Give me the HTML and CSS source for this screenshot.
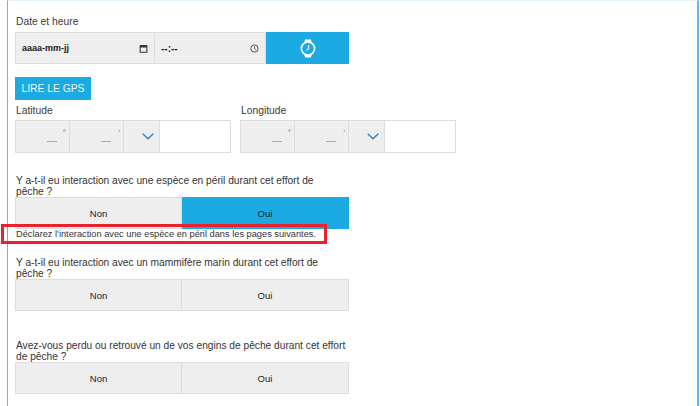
FILE: index.html
```html
<!DOCTYPE html>
<html lang="fr">

<head>
    <meta charset="UTF-8">
    <meta name="viewport" content="width=device-width, initial-scale=1.0">
    <title>Effort de pêche</title>
    <link rel="stylesheet" href="styles.css">
</head>

<body>
    <div class="panel">
        <label class="fieldLabel">Date et heure</label>
        <div class="dateRow">
            <div class="dateCell dateCell-date">
                <span>aaaa-mm-jj</span>
                <svg class="pickerIcon" viewBox="0 0 12 12"><path d="M1.5 2.5h9v8.5h-9z" fill="none" stroke="#333" stroke-width="1.4"/><path d="M1.5 1.5h9v3.2h-9z" fill="#333"/></svg>
            </div>
            <div class="dateCell dateCell-time">
                <span>--:--</span>
                <svg class="pickerIcon" viewBox="0 0 12 12"><circle cx="6" cy="6" r="4.8" fill="none" stroke="#444" stroke-width="1.2"/><path d="M6 3v3.2l2.2 1.3" fill="none" stroke="#444" stroke-width="1"/></svg>
            </div>
            <button class="nowButton">
                <svg class="watchIcon" viewBox="0 0 16 19"><path d="M4 4l1.2-3.5h5.6l1.2 3.5M4 15l1.2 3.5h5.6l1.2-3.5" fill="#fff"/><circle cx="8" cy="9.5" r="6.6" fill="#1caae2" stroke="#fff" stroke-width="1.6"/><path d="M8.6 6v3.8l-2.2 1.6" fill="none" stroke="#fff" stroke-width="1.1"/></svg>
            </button>
        </div>

        <button class="gpsButton">LIRE LE GPS</button>

        <div class="coords">
            <div class="coord">
                <label class="fieldLabel">Latitude</label>
                <div class="coordRow">
                    <div class="coordCell coordCell-deg"><span class="blank"></span><span class="unit">°</span></div>
                    <div class="coordCell coordCell-min"><span class="blank"></span><span class="unit">'</span></div>
                    <div class="coordCell coordCell-dir">
                        <svg class="chevron" viewBox="0 0 12 7"><path d="M0.7 0.8l5.3 5 5.3-5" fill="none" stroke="#2e87c8" stroke-width="1.5"/></svg>
                    </div>
                    <div class="coordCell coordCell-dec"></div>
                </div>
            </div>
            <div class="coord">
                <label class="fieldLabel">Longitude</label>
                <div class="coordRow">
                    <div class="coordCell coordCell-deg"><span class="blank"></span><span class="unit">°</span></div>
                    <div class="coordCell coordCell-min"><span class="blank"></span><span class="unit">'</span></div>
                    <div class="coordCell coordCell-dir">
                        <svg class="chevron" viewBox="0 0 12 7"><path d="M0.7 0.8l5.3 5 5.3-5" fill="none" stroke="#2e87c8" stroke-width="1.5"/></svg>
                    </div>
                    <div class="coordCell coordCell-dec"></div>
                </div>
            </div>
        </div>

        <div class="question question-first">
            <p class="questionText">Y a-t-il eu interaction avec une espèce en péril durant cet effort de<br>pêche ?</p>
            <div class="choices">
                <button class="choice">Non</button>
                <button class="choice choice-active">Oui</button>
            </div>
        </div>
        <p class="notice">Déclarez l'interaction avec une espèce en péril dans les pages suivantes.</p>

        <div class="question question-second">
            <p class="questionText">Y a-t-il eu interaction avec un mammifère marin durant cet effort de<br>pêche ?</p>
            <div class="choices">
                <button class="choice">Non</button>
                <button class="choice">Oui</button>
            </div>
        </div>

        <div class="question question-third">
            <p class="questionText">Avez-vous perdu ou retrouvé un de vos engins de pêche durant cet effort<br>de pêche ?</p>
            <div class="choices">
                <button class="choice">Non</button>
                <button class="choice">Oui</button>
            </div>
        </div>
    </div>
</body>
</html>
```

FILE: styles.css
```css
html, body {
    margin: 0;
    height: 406px;
    overflow: hidden;
    background-color: white;
}

body {
    font-family: "Liberation Sans", Arial, sans-serif;
    color: #333;
}

.panel {
    box-sizing: border-box;
    height: 406px;
    margin: 0 1px 0 7px;
    padding: 15px 0 0 7px;
    border-left: 1px solid #6cb2e4;
    border-right: 2px solid #6cb2e4;
    border-top: 1px solid #e4f2fb;
}

.fieldLabel {
    display: block;
    padding-left: 1px;
    font-size: 10.3px;
    line-height: 12px;
    color: #3a3a3a;
}

.dateRow {
    display: flex;
    width: 334px;
    height: 32px;
    margin-top: 4px;
}

.dateCell {
    box-sizing: border-box;
    display: flex;
    align-items: center;
    justify-content: space-between;
    padding: 0 6px;
    background-color: #eeeeee;
    border: 1px solid #dcdcdc;
    font-size: 9px;
    font-weight: bold;
    color: #222;
}

.dateCell-date {
    width: 140px;
}

.dateCell-time {
    width: 111px;
    border-left: none;
    font-size: 10px;
}

.pickerIcon {
    width: 9px;
    height: 9px;
}

.nowButton {
    flex: 1;
    display: flex;
    align-items: center;
    justify-content: center;
    padding: 0;
    border: none;
    background-color: #1caae2;
}

.watchIcon {
    width: 16px;
    height: 19px;
}

.gpsButton {
    display: block;
    width: 76px;
    height: 23px;
    margin-top: 13px;
    padding: 0;
    border: none;
    background-color: #1caae2;
    color: #e8f6fd;
    font-family: inherit;
    font-size: 10.3px;
}

.coords {
    display: flex;
    gap: 9px;
    margin-top: 4px;
}

.coord .fieldLabel {
    height: 16px;
    line-height: 13px;
}

.coordRow {
    display: flex;
    width: 216px;
    height: 33px;
}

.coordCell {
    box-sizing: border-box;
    position: relative;
    background-color: #eeeeee;
    border: 1px solid #dcdcdc;
    border-left: none;
}

.coordCell-deg {
    width: 55px;
    border-left: 1px solid #dcdcdc;
}

.coordCell-min {
    width: 54px;
}

.coordCell-dir {
    width: 36px;
    display: flex;
    align-items: center;
    justify-content: center;
    padding-left: 12px;
}

.coordCell-dec {
    flex: 1;
    background-color: white;
}

.blank {
    position: absolute;
    right: 12px;
    top: 20px;
    width: 10px;
    border-top: 1px solid #a9a9a9;
}

.unit {
    position: absolute;
    right: 3px;
    top: 7px;
    font-size: 8px;
    line-height: 10px;
    color: #666;
}

.chevron {
    width: 12px;
    height: 7px;
}

.question {
    width: 334px;
}

.question-first {
    margin-top: 23px;
}

.question-second {
    margin-top: 14px;
}

.question-third {
    margin-top: 30px;
}

.questionText {
    margin: 0;
    padding-left: 1px;
    font-size: 10.2px;
    line-height: 10.5px;
    white-space: nowrap;
    color: #333;
}

.choices {
    display: grid;
    grid-template-columns: 167px 167px;
    height: 32px;
}

.choice {
    padding: 0;
    background-color: #eeeeee;
    border: 1px solid #dcdcdc;
    color: #222;
    font-family: inherit;
    font-size: 9.5px;
}

.choice + .choice {
    border-left: none;
}

.choice-active {
    background-color: #1caae2;
    border-color: #1caae2;
}

/* red annotation sits over the bottom of the buttons */
.notice {
    position: relative;
    box-sizing: border-box;
    width: 326px;
    height: 20px;
    margin: -5px 0 0 -14px;
    padding-left: 12px;
    border: 3px solid #e8212b;
    font-size: 9.25px;
    line-height: 14px;
    color: #333;
}
```
